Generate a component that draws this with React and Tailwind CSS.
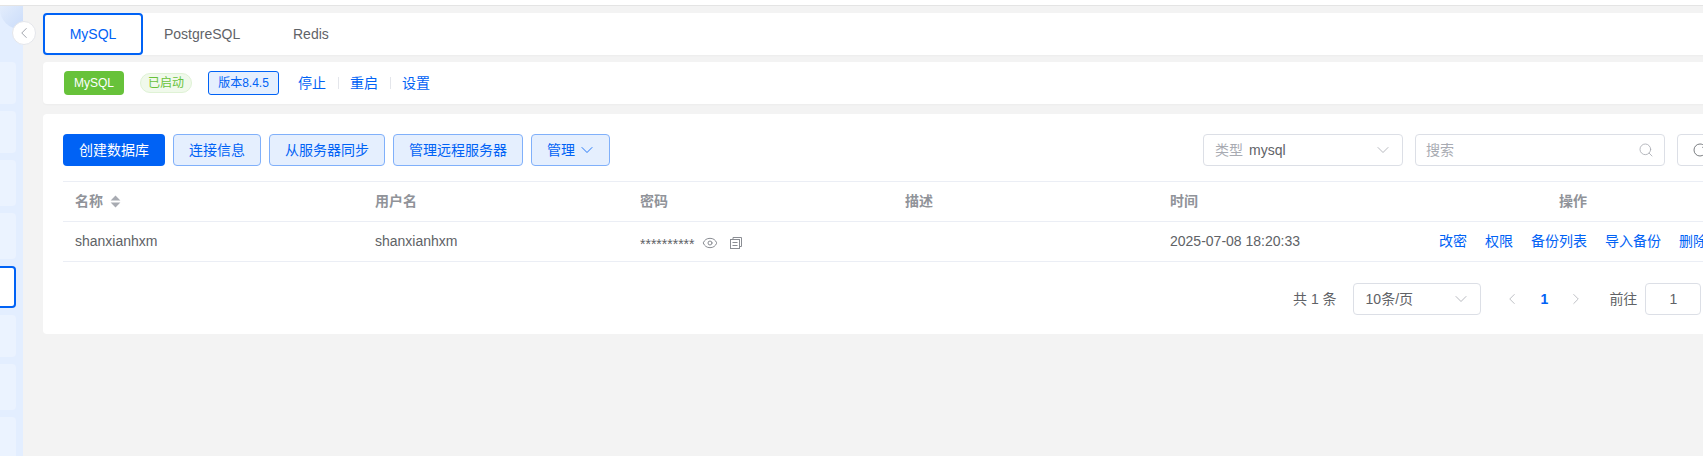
import React from 'react';
import { ChevronDown, ChevronLeft, ChevronRight, Search, RotateCw, Eye } from 'lucide-react';

const FONT = "font-['Liberation_Sans','Noto_Sans_CJK_SC',sans-serif]";

const sideItems = [
  { h: 'h-[42px]' },
  { h: 'h-[42px]' },
  { h: 'h-[46px]' },
  { h: 'h-[46px]' },
  { h: 'h-[42px]', active: true },
  { h: 'h-[42px]' },
  { h: 'h-[46px]' },
  { h: 'h-[46px]' },
];

const toolbarButtons = [
  { label: '连接信息', w: 'w-[88px]' },
  { label: '从服务器同步', w: 'w-[116px]' },
  { label: '管理远程服务器', w: 'w-[130px]' },
];

const rowActions = ['改密', '权限', '备份列表', '导入备份', '删除'];

function Sidebar() {
  return (
    <aside className="relative w-[23px] shrink-0 bg-[#e3eeff]">
      <div className="h-[23px] w-[23px] rounded-bl-[20px] bg-gradient-to-br from-[#e3edfc] to-[#cadcfa]" />
      <div className="mt-[33px] flex w-[16px] flex-col gap-[7px]">
        {sideItems.map((item, i) => (
          <div
            key={i}
            className={
              item.active
                ? `${item.h} rounded-r-[4px] border-2 border-l-0 border-[#0062f5] bg-white`
                : `${item.h} rounded-r-[4px] bg-[#ebf3ff]`
            }
          />
        ))}
      </div>
      <button className="absolute left-[12px] top-[15px] z-10 flex h-[24px] w-[24px] items-center justify-center rounded-full border border-[#e4e6eb] bg-white text-[#9a9ea6]">
        <ChevronLeft size={18} strokeWidth={1.25} />
      </button>
    </aside>
  );
}

function Tabs() {
  return (
    <div className="flex h-[42px] items-center rounded-[4px] bg-white text-[14px] text-[#5f6368] shadow-[0_1px_2px_rgba(0,0,0,0.03)]">
      <div className="flex h-[42px] w-[100px] items-center justify-center rounded-[4px] border-2 border-[#0062f5] text-[#0062f5]">MySQL</div>
      <div className="ml-[21px] w-[76px]">PostgreSQL</div>
      <div className="ml-[53px]">Redis</div>
    </div>
  );
}

function StatusBar() {
  return (
    <div className="flex h-[42px] items-center rounded-[4px] bg-white pl-[21px] shadow-[0_1px_2px_rgba(0,0,0,0.03)]">
      <span className="flex h-[24px] w-[60px] items-center justify-center rounded-[4px] bg-[#67c23a] text-[12px] font-medium text-white">MySQL</span>
      <span className="ml-[16px] flex h-[20px] w-[52px] items-center justify-center rounded-full border border-[#dff2d5] bg-[#f0f9eb] text-[12px] text-[#67c23a]">已启动</span>
      <span className="ml-[16px] flex h-[24px] w-[71px] items-center justify-center rounded-[3px] border border-[#0062f5] bg-[#e5effe] text-[12px] text-[#0062f5]">版本8.4.5</span>
      <span className="ml-[19px] text-[14px] text-[#0062f5]">停止</span>
      <span className="ml-[12px] mr-[11px] h-[12px] w-px bg-[#e4e6eb]" />
      <span className="text-[14px] text-[#0062f5]">重启</span>
      <span className="ml-[12px] mr-[11px] h-[12px] w-px bg-[#e4e6eb]" />
      <span className="text-[14px] text-[#0062f5]">设置</span>
    </div>
  );
}

function Toolbar() {
  return (
    <div className="flex items-center">
      <button className="flex h-[32px] w-[102px] items-center justify-center rounded-[4px] bg-[#0062f5] text-[14px] text-white">创建数据库</button>
      <div className="ml-[8px] flex gap-[8px]">
        {toolbarButtons.map((b) => (
          <button key={b.label} className={`flex h-[32px] ${b.w} items-center justify-center rounded-[4px] border border-[#80b0fa] bg-[#e5effe] text-[14px] text-[#0062f5]`}>
            {b.label}
          </button>
        ))}
        <button className="flex h-[32px] w-[79px] items-center gap-[2px] rounded-[4px] border border-[#80b0fa] bg-[#e5effe] pl-[15px] text-[14px] text-[#0062f5]">
          管理
          <ChevronDown size={20} strokeWidth={1} />
        </button>
      </div>
      <div className="ml-[593px] flex h-[32px] w-[200px] shrink-0 items-center rounded-[4px] border border-[#dcdfe6] pl-[11px] pr-[9px] text-[14px]">
        <span className="text-[#a8abb2]">类型</span>
        <span className="ml-[6px] text-[#5f6368]">mysql</span>
        <ChevronDown size={20} strokeWidth={1} className="ml-auto text-[#a8abb2]" />
      </div>
      <div className="ml-[12px] flex h-[32px] w-[250px] shrink-0 items-center rounded-[4px] border border-[#dcdfe6] pl-[10px] pr-[10px] text-[14px] text-[#a8abb2]">
        <span>搜索</span>
        <Search size={16} strokeWidth={1.25} className="ml-auto" />
      </div>
      <div className="ml-[12px] flex h-[32px] w-[46px] shrink-0 items-center justify-center rounded-[4px] border border-[#dcdfe6] text-[#5f6368]">
        <RotateCw size={16} strokeWidth={1.25} />
      </div>
    </div>
  );
}

function DbTable() {
  return (
    <div className="mt-[15px] w-[1700px] border-t border-[#ebeef5] text-[14px]">
      <div className="flex h-[40px] items-center border-b border-[#ebeef5] font-bold text-[#909399]">
        <div className="flex w-[300px] items-center gap-[7px] pl-[12px]">
          名称
          <svg width="11" height="13" viewBox="0 0 10 12" fill="#a8abb2">
            <path d="M5 0.5 9.5 5H0.5z" />
            <path d="M5 11.5 0.5 7h9z" />
          </svg>
        </div>
        <div className="w-[265px] pl-[12px]">用户名</div>
        <div className="w-[265px] pl-[12px]">密码</div>
        <div className="w-[265px] pl-[12px]">描述</div>
        <div className="w-[401px] pl-[12px]">时间</div>
        <div>操作</div>
      </div>
      <div className="flex h-[40px] items-center border-b border-[#ebeef5] text-[#606266]">
        <div className="w-[300px] pl-[12px]">shanxianhxm</div>
        <div className="w-[265px] pl-[12px]">shanxianhxm</div>
        <div className="flex w-[265px] items-center pl-[12px]">
          <span className="mt-[6px]">**********</span>
          <Eye size={16} strokeWidth={1.5} className="ml-[8px] mt-[2px] text-[#8a8d93]" />
          <svg width="12" height="12" viewBox="0 0 12 12" fill="none" stroke="#8a8d93" strokeWidth="1" className="ml-[12px] mt-[2px]">
            <path d="M3 2.5V.5h8.5v9h-2" />
            <rect x="0.5" y="2.5" width="9" height="9" />
            <path d="M2.5 5.5h5M2.5 8.5h5" />
          </svg>
        </div>
        <div className="w-[265px] pl-[12px]" />
        <div className="w-[281px] pl-[12px]">2025-07-08 18:20:33</div>
        <div className="flex gap-[18px] text-[#0062f5]">
          {rowActions.map((a) => (
            <span key={a}>{a}</span>
          ))}
        </div>
      </div>
    </div>
  );
}

function Pagination() {
  return (
    <div className="mt-[21px] flex h-[32px] items-center text-[14px] text-[#606266]">
      <span className="ml-[1230px]">共 1 条</span>
      <div className="ml-[16px] flex h-[32px] w-[128px] items-center rounded-[4px] border border-[#dcdfe6] pl-[12px] pr-[9px]">
        10条/页
        <ChevronDown size={20} strokeWidth={1} className="ml-auto text-[#a8abb2]" />
      </div>
      <ChevronLeft size={18} strokeWidth={1} className="ml-[22px] text-[#a8abb2]" />
      <span className="ml-[20px] font-bold text-[#0062f5]">1</span>
      <ChevronRight size={18} strokeWidth={1} className="ml-[19px] text-[#a8abb2]" />
      <span className="ml-[24px]">前往</span>
      <div className="ml-[8px] flex h-[32px] w-[56px] shrink-0 items-center justify-center rounded-[4px] border border-[#dcdfe6]">1</div>
    </div>
  );
}

export default function App() {
  return (
    <div className={`${FONT} h-[456px] w-[1703px] overflow-hidden bg-[#f3f3f3]`}>
      <div className="h-[6px] border-b border-[#e4e4e4] bg-white" />
      <div className="flex h-[450px]">
        <Sidebar />
        <main className="min-w-0 flex-1 pl-[20px] pt-[7px]">
          <div className="w-[1700px]">
            <Tabs />
            <div className="mt-[7px]">
              <StatusBar />
            </div>
            <section className="mt-[10px] h-[220px] rounded-[4px] bg-white pl-[20px] pt-[20px]">
              <Toolbar />
              <DbTable />
              <Pagination />
            </section>
          </div>
        </main>
      </div>
    </div>
  );
}
